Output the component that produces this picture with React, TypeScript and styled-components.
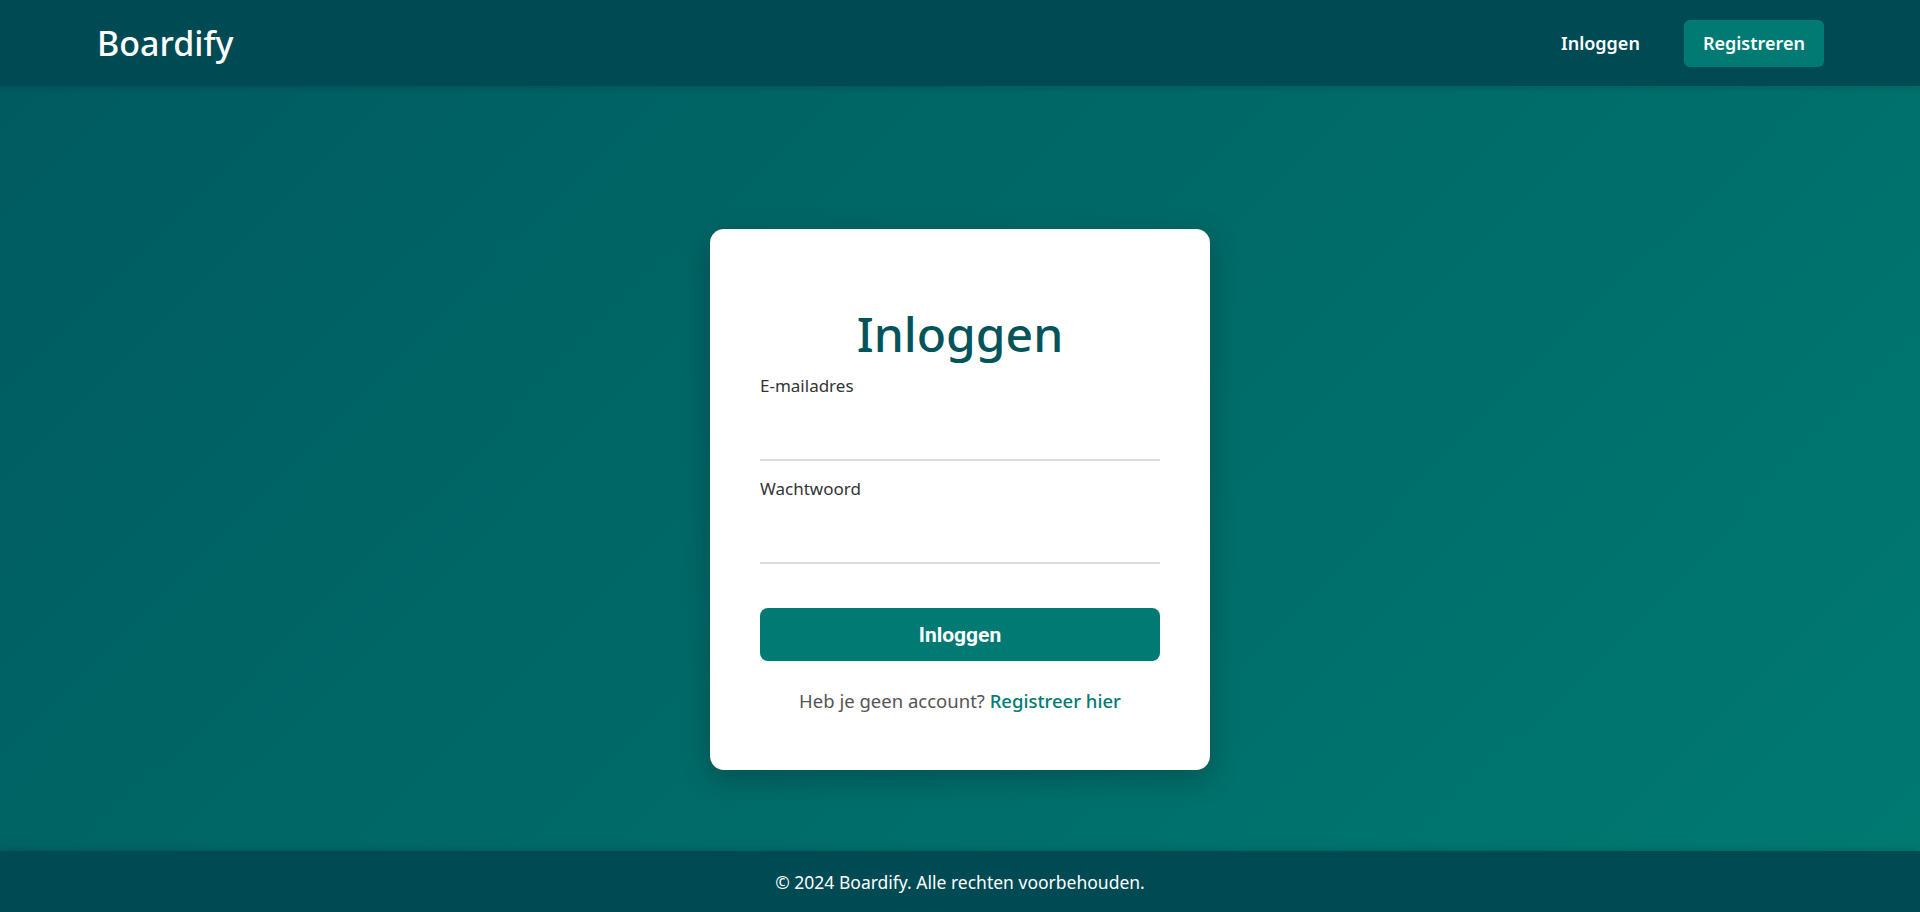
import React from "react";
import styled, { createGlobalStyle } from "styled-components";

const Global = createGlobalStyle`
  html, body { margin: 0; padding: 0; height: 100%; }
  body { font-family: "Noto Sans", Lato, sans-serif; }
  #root { min-height: 100vh; }
  * { box-sizing: border-box; }
`;

const Page = styled.div`
  min-height: 100vh;
  display: flex;
  flex-direction: column;
  background: linear-gradient(135deg, #005a60 0%, #006a68 50%, #007a72 100%);
`;

const Header = styled.header`
  height: 86px;
  background: #004a54;
  display: flex;
  align-items: center;
  justify-content: space-between;
  padding: 0 96px 0 97px;
  box-shadow: 0 2px 6px rgba(0, 0, 0, 0.12);
`;

const Logo = styled.div`
  color: #fff;
  font-size: 34px;
  font-weight: 500;
  font-family: "Noto Sans", sans-serif;
`;

const Nav = styled.nav`
  display: flex;
  align-items: center;
  gap: 44px;
`;

const NavLink = styled.a<{ $primary?: boolean }>`
  color: #fff;
  font-size: 18px;
  font-weight: 600;
  text-decoration: none;
  padding: ${(p) => (p.$primary ? "11px 19px" : "0")};
  background: ${(p) => (p.$primary ? "#007a72" : "transparent")};
  border-radius: 6px;
  line-height: 25px;
`;

const Main = styled.main`
  flex: 1;
  display: flex;
  align-items: center;
  justify-content: center;
  padding-top: 62px;
`;

const Card = styled.div`
  width: 500px;
  background: #fff;
  border-radius: 14px;
  box-shadow: 0 8px 28px rgba(0, 0, 0, 0.25);
  padding: 75px 50px 57px;
`;

const Title = styled.h1`
  margin: 0 0 11px;
  text-align: center;
  color: #02545a;
  font-size: 48px;
  font-weight: 500;
  line-height: 60px;
`;

const Field = styled.div`
  display: flex;
  flex-direction: column;
  margin-bottom: 17px;
`;

const Label = styled.label`
  color: #333;
  font-size: 17px;
  line-height: 22px;
`;

const Input = styled.input`
  border: none;
  border-bottom: 2px solid #dcdcdc;
  height: 64px;
  outline: none;
  font-size: 16px;
`;

const Submit = styled.button`
  width: 100%;
  height: 53px;
  margin-top: 27px;
  border: none;
  border-radius: 8px;
  background: #007a72;
  color: #fff;
  font-family: Roboto, sans-serif;
  font-weight: 700;
  font-size: 21px;
`;

const Alt = styled.p`
  margin: 27px 0 0;
  text-align: center;
  color: #555;
  font-size: 18.5px;
  line-height: 25px;
`;

const AltLink = styled.a`
  color: #007a72;
  font-weight: 500;
  text-decoration: none;
`;

const Footer = styled.footer`
  height: 61px;
  background: #004a54;
  color: #fff;
  display: flex;
  align-items: center;
  justify-content: center;
  font-size: 17.5px;
  box-shadow: 0 -2px 6px rgba(0, 0, 0, 0.12);
`;

export default function App() {
  return (
    <>
      <Global />
      <Page>
        <Header>
          <Logo>Boardify</Logo>
          <Nav>
            <NavLink href="#">Inloggen</NavLink>
            <NavLink href="#" $primary>
              Registreren
            </NavLink>
          </Nav>
        </Header>
        <Main>
          <Card>
            <Title>Inloggen</Title>
            <Field>
              <Label>E-mailadres</Label>
              <Input type="email" />
            </Field>
            <Field>
              <Label>Wachtwoord</Label>
              <Input type="password" />
            </Field>
            <Submit>Inloggen</Submit>
            <Alt>
              Heb je geen account? <AltLink href="#">Registreer hier</AltLink>
            </Alt>
          </Card>
        </Main>
        <Footer>© 2024 Boardify. Alle rechten voorbehouden.</Footer>
      </Page>
    </>
  );
}
